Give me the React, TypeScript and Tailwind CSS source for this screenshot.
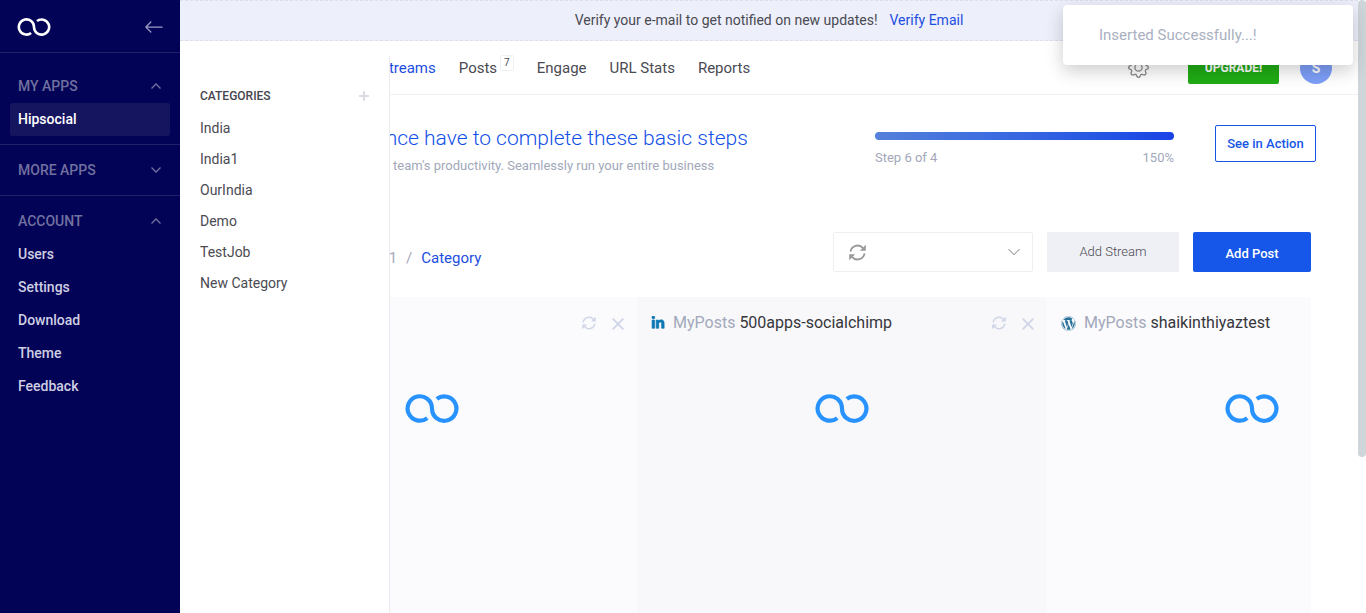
import React from "react";
import { FaLinkedinIn, FaWordpress } from "react-icons/fa";
import { BsGear, BsArrowLeft, BsChevronDown } from "react-icons/bs";

function LoopMark({ className }: { className: string }) {
  return (
    <svg viewBox="0 0 54 29" fill="none" stroke="currentColor" strokeWidth="4.2" className={className} aria-hidden="true">
      <path d="M31.8 4.9A12.2 12.2 0 1 1 27 14.5A12.2 12.2 0 1 0 22.3 24.1" />
    </svg>
  );
}

function Cross() {
  return (
    <svg viewBox="0 0 12 12" fill="none" stroke="currentColor" strokeWidth="1.9" className="size-3" aria-hidden="true">
      <path d="M0.7 0.7L11.3 11.3M11.3 0.7L0.7 11.3" />
    </svg>
  );
}

function Sync({ className }: { className: string }) {
  return (
    <svg viewBox="0 0 16 16" fill="none" stroke="currentColor" strokeWidth="1.7" className={className} aria-hidden="true">
      <path d="M1.4 7.2A6.7 6.7 0 0 1 13.2 3.9M14.6 8.8A6.7 6.7 0 0 1 2.8 12.1" />
      <path d="M15.8 0.8V6.4H10.2ZM0.2 15.2V9.6H5.8Z" fill="currentColor" stroke="none" />
    </svg>
  );
}

function Caret({ up }: { up: boolean }) {
  return (
    <svg viewBox="0 0 10 6" fill="none" stroke="currentColor" strokeWidth="1.3" className="h-[6px] w-[10px]" aria-hidden="true">
      <path d={up ? "M0.5 5.5L5 1L9.5 5.5" : "M0.5 0.5L5 5L9.5 0.5"} />
    </svg>
  );
}

type GroupProps = { title: string; items: string[]; open: boolean; active?: string };

function NavGroup({ title, items, open, active }: GroupProps) {
  return (
    <section className="border-t border-[#20206b] px-[10px] py-2 first-of-type:pt-4">
      <button className="flex h-[34px] w-full items-center justify-between pr-[9px] pl-2 text-sm font-medium text-[#71719f]">
        {title}
        <Caret up={open} />
      </button>
      {items.map((item) => (
        <a
          key={item}
          href="#"
          className={
            item === active
              ? "flex h-[33px] items-center rounded-xs bg-[#14145f] px-2 pb-px text-sm font-medium text-white"
              : "flex h-[33px] items-center px-2 pb-px text-sm font-medium text-[#cfcfe2]"
          }
        >
          {item}
        </a>
      ))}
    </section>
  );
}

function Sidebar() {
  return (
    <aside className="w-[180px] shrink-0 bg-[#020257]">
      <div className="flex h-[52px] items-center justify-between pt-px pr-4 pl-[17px]">
        <LoopMark className="h-[18px] w-[34px] text-white" />
        <BsArrowLeft className="size-5 text-[#9c9cc4]" />
      </div>
      <NavGroup title="MY APPS" items={["Hipsocial"]} open active="Hipsocial" />
      <NavGroup title="MORE APPS" items={[]} open={false} />
      <NavGroup title="ACCOUNT" items={["Users", "Settings", "Download", "Theme", "Feedback"]} open />
    </aside>
  );
}

const categories = ["India", "India1", "OurIndia", "Demo", "TestJob", "New Category"];

function CategoryPanel() {
  return (
    <div className="absolute inset-y-0 left-0 z-10 w-[210px] bg-white pt-[15px]">
      <div className="h-full border-r border-[#ececf0] px-5">
        <div className="flex h-20 items-center justify-between">
          <h2 className="text-[12px] font-medium text-[#45454d]">CATEGORIES</h2>
          <button aria-label="Add category" className="text-[#dcdce4]">
            <svg viewBox="0 0 10 10" stroke="currentColor" strokeWidth="2" className="size-[10px]" aria-hidden="true">
              <path d="M5 0V10M0 5H10" />
            </svg>
          </button>
        </div>
        <ul className="-mt-[23px]">
          {categories.map((name) => (
            <li key={name} className="flex h-[31px] items-center">
              <a href="#" className="text-[14px] text-[#4a4a52]">{name}</a>
            </li>
          ))}
        </ul>
      </div>
    </div>
  );
}

function TopNav() {
  return (
    <header className="flex h-[54px] items-center justify-between border-b border-[#f0f0f3] pr-[26px] pl-[200px]">
      <nav className="flex items-center gap-[23px] pt-[2px] text-[15px] text-[#4a4a52]">
        <a href="#" className="text-[#1d4ee0]">Streams</a>
        <a href="#" className="flex items-center gap-[3px]">
          Posts
          <span className="mb-3 rounded-xs border border-[#f0f0f3] px-[3px] text-[10px] leading-[14px]">7</span>
        </a>
        <a href="#">Engage</a>
        <a href="#">URL Stats</a>
        <a href="#">Reports</a>
      </nav>
      <div className="flex items-center">
        <button aria-label="Settings" className="mr-[39px] text-[#8b8b8b]"><BsGear className="size-[21px]" /></button>
        <button className="mr-[21px] h-8 w-[91px] rounded-xs bg-[#20ac14] text-[12px] font-bold text-white">UPGRADE!</button>
        <span className="flex size-8 items-center justify-center rounded-full bg-[#7d9ff8] text-sm font-bold text-white">S</span>
      </div>
    </header>
  );
}

function StepsBanner() {
  return (
    <section className="flex items-start pt-[30px] pr-[42px]">
      <div className="flex-1 pl-[180px]">
        <h1 className="text-[21px] leading-[26px] font-light text-[#1150e6]">Hence have to complete these basic steps</h1>
        <p className="pl-[33px] text-[13px] leading-[30px] text-[#a2a8ba]">team&apos;s productivity. Seamlessly run your entire business</p>
      </div>
      <div className="mr-[41px] w-[299px] pt-[7px] text-[13px] text-[#a2a8ba]">
        <div role="progressbar" aria-label="Steps" aria-valuenow={100} className="h-2 rounded-full bg-linear-to-r from-[#5580da] to-[#1a43e6]" />
        <div className="flex justify-between pt-[9px] leading-[18px]">
          <span>Step 6 of 4</span>
          <span>150%</span>
        </div>
      </div>
      <button className="h-[37px] w-[101px] rounded-xs border border-[#1656e6] text-[13px] font-medium text-[#1656e6]">See in Action</button>
    </section>
  );
}

function Toolbar() {
  return (
    <section className="flex items-center justify-between pt-[51px] pr-[47px]">
      <div className="flex gap-[9px] pt-3 pl-[176px] text-[15px] text-[#a2a8ba]">
        <a href="#">India1</a>
        <span>/</span>
        <a href="#" className="text-[#1d4ee0]">Category</a>
      </div>
      <div className="flex gap-[14px]">
        <button aria-label="Refresh interval" className="flex h-10 w-[200px] items-center justify-between rounded-xs border border-[#efeff2] pr-[11px] pl-[15px] text-[#999]">
          <Sync className="size-[17px]" />
          <BsChevronDown className="size-[14px]" />
        </button>
        <button className="h-10 w-[132px] rounded-xs bg-[#eff0f5] text-[13px] font-light text-[#4a4a52]">Add Stream</button>
        <button className="h-10 w-[118px] rounded-xs bg-[#1656e8] pt-[3px] text-[13px] font-medium text-white">Add Post</button>
      </div>
    </section>
  );
}

type StreamProps = { icon?: React.ReactNode; account?: string; tint: string };

function Stream({ icon, account, tint }: StreamProps) {
  return (
    <article className={tint}>
      <div className="flex h-[52px] items-center justify-between pr-[13px] pl-[14px]">
        <h3 className="flex items-center gap-2 text-base text-[#36363c]">
          {icon}
          {account && <span><span className="text-[#a2a8ba]">MyPosts</span> {account}</span>}
        </h3>
        <div className="flex items-center gap-4 text-[#d0d6e8]">
          <button aria-label="Refresh stream"><Sync className="size-[14px]" /></button>
          <button aria-label="Remove stream" className="pt-[2px]"><Cross /></button>
        </div>
      </div>
      <div className="flex justify-center pt-[45px]">
        <LoopMark className="h-[29px] w-[54px] text-[#2893ff]" />
      </div>
    </article>
  );
}

export default function App() {
  return (
    <div className="flex min-h-screen bg-white font-['Roboto',sans-serif]">
      <Sidebar />
      <div className="flex min-w-0 flex-1 flex-col">
        <div className="flex h-[41px] items-center justify-center gap-3 border-y border-dashed border-[#dcdeee] bg-[#edeffb] text-[14px] text-[#4a4a52]">
          <span>Verify your e-mail to get notified on new updates!</span>
          <a href="#" className="text-[#1d4ee0]">Verify Email</a>
        </div>
        <main className="relative flex flex-1 flex-col">
          <CategoryPanel />
          <TopNav />
          <StepsBanner />
          <Toolbar />
          <section className="mt-[25px] mr-[47px] ml-[47px] grid flex-1 auto-cols-[410px] grid-flow-col overflow-hidden">
            <Stream tint="bg-[#fbfbfd]" />
            <Stream tint="bg-[#f8f8fa]" icon={<FaLinkedinIn className="size-[14px] text-[#0c78b4]" stroke="currentColor" strokeWidth="24" />} account="500apps-socialchimp" />
            <Stream tint="bg-[#fbfbfd]" icon={<FaWordpress className="size-[15px] text-[#287299]" />} account="shaikinthiyaztest" />
          </section>
        </main>
      </div>
      <div className="w-2 shrink-0 bg-white">
        <div className="h-[457px] rounded-full bg-[#ced6da]" />
      </div>
      <div role="status" className="absolute top-[5px] right-[13px] z-20 flex h-[60px] w-[290px] items-center rounded-sm bg-white pl-9 text-[15px] text-[#a9afbf] shadow-[0_6px_18px_rgba(0,0,0,0.2)]">
        Inserted Successfully...!
      </div>
    </div>
  );
}
